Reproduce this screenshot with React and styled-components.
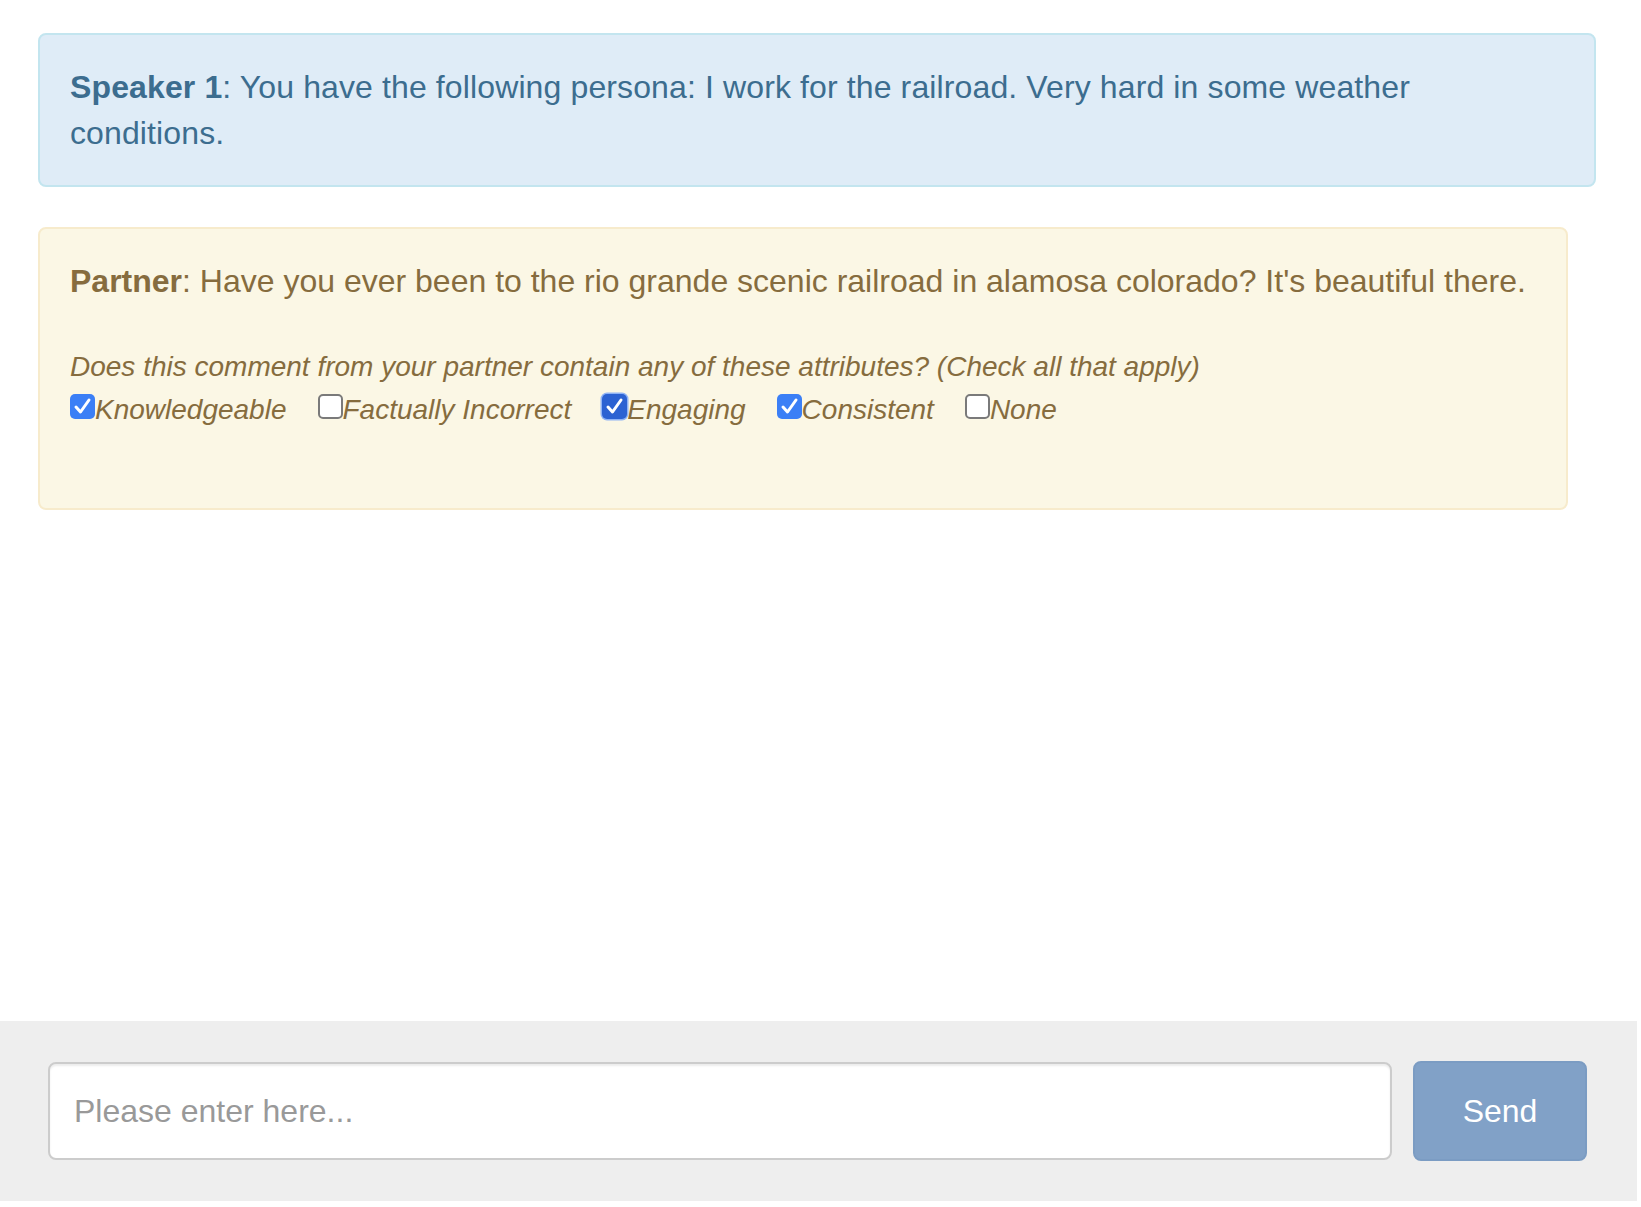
import React from "react";
import styled, { createGlobalStyle } from "styled-components";

const GlobalStyle = createGlobalStyle`
  html, body {
    margin: 0;
    padding: 0;
    background: #fff;
  }
  body {
    font-family: "Liberation Sans", Arial, sans-serif;
    font-size: 28px;
    line-height: 1.42857;
    color: #333;
  }
  * { box-sizing: border-box; }
`;

const Page = styled.div`
  min-height: 1207px;
  display: flex;
  flex-direction: column;
`;

const Messages = styled.div`
  flex: 1;
  padding: 33px 0 0 38px;
`;

const Alert = styled.div`
  margin: 0 ${({ $right }) => $right}px 40px 0;
  padding: 29px 30px;
  border: 2px solid ${({ $border }) => $border};
  border-radius: 8px;
  background: ${({ $bg }) => $bg};
  color: ${({ $color }) => $color};
  font-size: 32px;
  line-height: 46px;
`;

const Message = styled.p`
  margin: 0;
  letter-spacing: ${({ $spacing }) => $spacing || 0}px;
`;

const Question = styled.div`
  margin-top: 43px;
  font-size: 28px;
  line-height: 40px;
  font-style: italic;
`;

const Options = styled.div`
  margin: 3px 0 49px;
  font-size: 28px;
  line-height: 40px;
  font-style: italic;
  white-space: nowrap;
`;

const Option = styled.label`
  display: inline-block;
  margin-right: 31px;
`;

const Box = styled.span`
  display: inline-block;
  vertical-align: baseline;
  width: 25px;
  height: 25px;
  border-radius: 5px;
  position: relative;
  background: ${({ $checked, $focus }) =>
    $focus ? "#2c62d2" : $checked ? "#3b7ff6" : "#fff"};
  border: ${({ $checked }) => ($checked ? "none" : "2px solid #7a7a7a")};
  box-shadow: ${({ $focus }) => ($focus ? "0 0 0 1.5px #8fb3f5" : "none")};

  svg {
    position: absolute;
    left: 0;
    top: 0;
  }
`;

const Footer = styled.div`
  display: flex;
  align-items: center;
  gap: 21px;
  margin: 0 4px 6px 0;
  padding: 40px 50px 40px 48px;
  background: #eeeeee;
`;

const Input = styled.input`
  flex: 1;
  height: 98px;
  padding: 0 24px;
  border: 2px solid #cccccc;
  border-radius: 8px;
  background: #fff;
  box-shadow: inset 0 2px 2px rgba(0, 0, 0, 0.075);
  font-family: inherit;
  font-size: 32px;
  color: #555;
  outline: none;

  &::placeholder {
    color: #999;
  }
`;

const SendButton = styled.button`
  width: 174px;
  height: 100px;
  border: 2px solid #7b9cc3;
  border-radius: 8px;
  background: #81a1c7;
  color: #fff;
  font-family: inherit;
  font-size: 32px;
  cursor: not-allowed;
`;

const Checkbox = ({ checked, focus }) => (
  <Box $checked={checked} $focus={focus}>
    {checked && (
      <svg width="25" height="25" viewBox="0 0 25 25">
        <path
          d="M6 13 L10.5 18 L19 6"
          fill="none"
          stroke="#fff"
          strokeWidth="3"
          strokeLinecap="round"
          strokeLinejoin="round"
        />
      </svg>
    )}
  </Box>
);

const attributes = [
  { label: "Knowledgeable", checked: true },
  { label: "Factually Incorrect", checked: false },
  { label: "Engaging", checked: true, focus: true },
  { label: "Consistent", checked: true },
  { label: "None", checked: false },
];

const App = () => {
  return (
    <Page>
      <GlobalStyle />
      <Messages>
        <Alert $right={45} $bg="#dfecf7" $border="#c3e5ef" $color="#3c6d8f">
          <Message $spacing={0.12}>
            <b>Speaker 1</b>: You have the following persona: I work for the
            railroad. Very hard in some weather conditions.
          </Message>
        </Alert>

        <Alert $right={73} $bg="#fbf7e5" $border="#f7ebcc" $color="#866c3e">
          <Message>
            <b>Partner</b>: Have you ever been to the rio grande scenic railroad
            in alamosa colorado? It's beautiful there.
          </Message>
          <Question>
            Does this comment from your partner contain any of these attributes?
            (Check all that apply)
          </Question>
          <Options>
            {attributes.map((a) => (
              <Option key={a.label}>
                <Checkbox checked={a.checked} focus={a.focus} />
                {a.label}
              </Option>
            ))}
          </Options>
        </Alert>
      </Messages>

      <Footer>
        <Input placeholder="Please enter here..." />
        <SendButton disabled>Send</SendButton>
      </Footer>
    </Page>
  );
};

export default App;
